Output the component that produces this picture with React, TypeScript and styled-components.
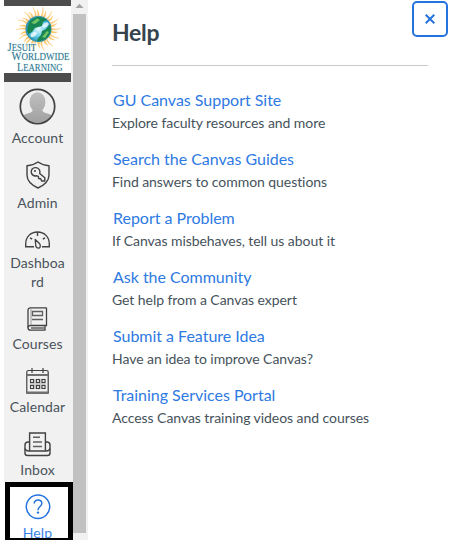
import React from "react";
import styled, { createGlobalStyle } from "styled-components";

const GlobalStyle = createGlobalStyle`
  * { box-sizing: border-box; }
  html, body { margin: 0; background: #fff; overflow: hidden; }
  body { font-family: Lato, "Open Sans", sans-serif; color: #2d3b45; font-variant-ligatures: none; }
`;

const Page = styled.div`
  display: flex;
  width: 450px;
  height: 540px;
  padding-left: 4px;
  overflow: hidden;
  background: #fff;
`;

const Nav = styled.nav`
  width: 69px;
  flex: none;
  background: #f1f1f1;
  display: flex;
  flex-direction: column;
`;

const LogoFrame = styled.div`
  width: 67px;
  height: 82px;
  flex: none;
  padding: 6px 0 9px;
  background: #4d4d4d;
  svg { display: block; background: #fff; }
`;

const NavItem = styled.a<{ $top: number; $gap: number }>`
  width: 67px;
  flex: none;
  display: flex;
  flex-direction: column;
  align-items: center;
  padding-top: ${(p) => p.$top}px;
  gap: ${(p) => p.$gap}px;
  svg { display: block; flex: none; }
`;

const ActiveRow = styled.div`
  flex: none;
  height: 58px;
  margin-top: 3px;
  padding-left: 1px;
  background: #fff;
`;

const ActiveItem = styled(NavItem)`
  width: 68px;
  height: 58px;
  border: 5px solid #000;
  border-bottom-width: 2px;
  padding-right: 3px;
  overflow: hidden;
  background: #fff;
`;

const Label = styled.span<{ $active?: boolean }>`
  font-size: 14px;
  line-height: 19px;
  letter-spacing: 0.1px;
  text-align: center;
  white-space: pre;
  color: ${(p) => (p.$active ? "#3b82e6" : "#4a535b")};
`;

const Scrollbar = styled.div`
  width: 15px;
  flex: none;
  background: #f1f1f1;
  svg { display: block; }
`;

const Thumb = styled.div`
  width: 13px;
  height: 519px;
  background: #c1c1c1;
`;

const Tray = styled.main`
  flex: 1;
  min-width: 0;
  padding-left: 24px;
`;

const Header = styled.header`
  display: flex;
  justify-content: space-between;
  align-items: flex-start;
  width: 336px;
  height: 65px;
`;

const Title = styled.h2`
  margin: 18px 0 0;
  font-size: 23px;
  line-height: 29px;
  font-weight: 700;
  letter-spacing: -0.3px;
  color: #35434d;
`;

const Links = styled.ul`
  list-style: none;
  width: 316px;
  margin: 0;
  padding: 23px 0 0;
  border-top: 1px solid #c9c9c9;
`;

const LinkItem = styled.li`
  height: 59px;
`;

const LinkTitle = styled.a`
  display: block;
  padding-left: 1px;
  font-size: 16px;
  line-height: 22px;
  letter-spacing: -0.02px;
  color: #2e7ae2;
  white-space: nowrap;
`;

const LinkText = styled.div`
  margin-top: 1px;
  font-size: 14px;
  line-height: 22px;
  letter-spacing: -0.06px;
  color: #46525b;
  white-space: nowrap;
`;

const CloseButton = styled.button`
  width: 36px;
  height: 36px;
  flex: none;
  margin: 1px 0 0;
  padding: 0;
  display: flex;
  align-items: center;
  justify-content: center;
  border: 2px solid #2573df;
  border-radius: 5px;
  background: #fff;
`;

const ink = "#414141";

const Logo = () => (
  <svg width="67" height="67" viewBox="4 6 67 67">
    <defs>
      <radialGradient id="globe" cx="0.5" cy="0.5" r="0.55">
        <stop offset="0" stopColor="#e8fbff" />
        <stop offset="0.55" stopColor="#65cbe8" />
        <stop offset="1" stopColor="#1685ae" />
      </radialGradient>
    </defs>
    {Array.from({ length: 28 }, (_, i) => (
      <path
        key={i}
        d={i % 2 ? "M37.500 16.500Q39.500 12 37.800 6.500Q40.500 12 39.200 16.500Z" : "M37 16.500Q38.500 13 37 9.500Q40 13 39.200 16.500Z"}
        fill="#fbc468"
        stroke="#fcd390"
        strokeWidth="0.4"
        transform={`rotate(${(i * 360) / 28} 38.500 29)`}
      />
    ))}
    <circle cx="38.500" cy="29" r="12.700" fill="url(#globe)" stroke="#2787a4" strokeWidth="0.700" />
    <path d="M27.500 27Q29 19 37 17Q43 16.500 47 20L43 22L42 26L38 27L35 28L32 32L28 34Q26.500 31 27.500 27Z" fill="#188653" />
    <path d="M31 23L37 18.500L40 20L35 24Z" fill="#72c565" />
    <path d="M38 38L41 35L42 31L46 29L50 24Q52.500 32 47 38Q42 42 37 41Z" fill="#188653" />
    <path d="M42 37L47 31L49 32L45 38Z" fill="#72c565" />
    <ellipse cx="45.500" cy="25" rx="3.500" ry="2" fill="#fff" opacity="0.75" transform="rotate(-35 45.500 25)" />
    <ellipse cx="33.500" cy="34.500" rx="3.500" ry="2" fill="#fff" opacity="0.75" transform="rotate(-35 33.500 34.500)" />
    <g fill="#2a7189" stroke="#e9f7fa" strokeWidth="1" paintOrder="stroke" fontFamily="Liberation Serif, serif">
      <text x="7.500" y="51" fontSize="13" textLength="28.500" lengthAdjust="spacingAndGlyphs">J<tspan fontSize="10.500">ESUIT</tspan></text>
      <text x="11.500" y="60" fontSize="11.500" textLength="58" lengthAdjust="spacingAndGlyphs">W<tspan fontSize="9.800">ORLDWIDE</tspan></text>
      <text x="17" y="71" fontSize="11.500" textLength="45.500" lengthAdjust="spacingAndGlyphs">L<tspan fontSize="9.800">EARNING</tspan></text>
    </g>
  </svg>
);

const AccountIcon = () => (
  <svg width="37" height="37" viewBox="0 0 37 37">
    <defs>
      <clipPath id="avatar"><circle cx="18.500" cy="18.500" r="16.500" /></clipPath>
      <linearGradient id="person" gradientUnits="userSpaceOnUse" x1="0" y1="4" x2="0" y2="35"><stop stopColor="#c0c0c0" /><stop offset="1" stopColor="#a0a0a0" /></linearGradient>
    </defs>
    <circle cx="18.500" cy="18.500" r="17" fill="#efefef" />
    <g fill="url(#person)" clipPath="url(#avatar)">
      <ellipse cx="18.500" cy="14" rx="8" ry="9.800" />
      <path d="M13.500 20h10v3q1 1.500 5 2.500q6 1 7 9H1.500q1-8 7-9q4-1 5-2.500z" />
    </g>
    <circle cx="18.500" cy="18.500" r="17.200" fill="none" stroke={ink} strokeWidth="1.700" />
  </svg>
);

const AdminIcon = () => (
  <svg width="26" height="28" viewBox="0 0 26 28" fill="none" stroke={ink} strokeWidth="1.400" strokeLinejoin="round">
    <path d="M13 1Q18 4.500 24 4.800V14C24 20 19.500 24 13 27C6.500 24 2 20 2 14V4.800Q8 4.500 13 1Z" />
    <path d="M7 8.200C9 5.800 13 6.200 14.500 9C15.200 10.500 15 11.500 14.700 12.500L19.800 16.800V20H16.600L15.700 17.800L13.600 17.500L13.400 15.300L11.800 14.800C9.500 15.200 7.200 14.400 6.500 12.300C6 10.800 6.100 9.500 7 8.200Z" strokeWidth="1.400" />
    <circle cx="10" cy="10" r="1" fill={ink} stroke="none" />
  </svg>
);

const DashboardIcon = () => (
  <svg width="27" height="18" viewBox="0 0 27 18" fill="none" stroke={ink} strokeWidth="1.400">
    <path d="M10 15.700H1.700V13C1.700 6 6.500 1 13.500 1S25.300 6 25.300 13V15.700H18" />
    <path d="M13.500 1V5M6 6.800L8.200 8.200M21 6.800L18.800 8.200" />
    <path d="M11.200 8.500L15.700 12.800C17 14.700 16.200 17.200 14.400 17.200C12.700 17.200 11.800 16 11.700 14Z" strokeWidth="1.300" strokeLinejoin="round" />
  </svg>
);

const CoursesIcon = () => (
  <svg width="21" height="24" viewBox="0 0 21 24" fill="none" stroke={ink} strokeWidth="1.300">
    <path d="M19.500 .8H3.500C1.600 .8 1 2 1 3.500V20.500C1 22.500 2 23.200 3.500 23.200H18.500" />
    <path d="M19.500 .8V18.500H3.500C2 18.500 1 19.200 1 20.500M18 18.500V23" />
    <path d="M4 1V18" stroke="#999" strokeWidth="1" />
    <path d="M5.500 4.500H15.500V8.500H5.500ZM5 12.500H16M4 21H17.500" stroke="#606060" />
  </svg>
);

const CalendarIcon = () => (
  <svg width="23" height="26" viewBox="0 0 23 26" fill="none" stroke={ink} strokeWidth="1.200">
    <path d="M2.500 2.500H20.500Q22.200 2.500 22.200 4V25.200H.8V4Q.8 2.500 2.500 2.500Z" />
    <path d="M1 7H22M1 24.500H22" stroke="#707070" strokeWidth="2" />
    <path d="M6 0V5M17 0V5" />
    <rect x="4" y="11" width="15.500" height="10" fill="#ccc" stroke="none" />
    {[4.5, 10.5, 16].flatMap((x) => [11.5, 17.5].map((y) => <rect key={`${x}-${y}`} x={x} y={y} width="3" height="3" fill="#f1f1f1" strokeWidth="1.100" />))}
  </svg>
);

const InboxIcon = () => (
  <svg width="27" height="25" viewBox="0 0 27 25" fill="none" stroke={ink} strokeWidth="1.400">
    <path d="M5.600 19V1H21.400V19" />
    <path d="M9 5.300H16M9 10H18M9 14.500H18" stroke="#606060" />
    <path d="M5.500 10H3.500Q1 10.500 1 13V21Q1 23.500 3.500 23.500H23.500Q26 23.500 26 21V13Q26 10.500 23.500 10H21.500" />
    <path d="M1 16.500Q2 19 4.500 19H22.500Q25 19 26 16.500" />
  </svg>
);

const HelpIcon = () => (
  <svg width="26" height="26" viewBox="0 0 26 26" fill="none" stroke="#2573df" strokeWidth="1.500">
    <circle cx="13" cy="12.700" r="11.700" />
    <path d="M9.200 9.500C9.200 4.800 16.800 5.100 16.800 9.400C16.800 12.600 13 12.400 13 16.200" />
    <circle cx="13" cy="18.600" r="1.200" fill="#2573df" stroke="none" />
  </svg>
);

const items = [
  { label: "Account", Icon: AccountIcon, top: 6, gap: 3 },
  { label: "Admin", Icon: AdminIcon, top: 14, gap: 4 },
  { label: "Dashboa\nrd", Icon: DashboardIcon, top: 19, gap: 4 },
  { label: "Courses", Icon: CoursesIcon, top: 16, gap: 3 },
  { label: "Calendar", Icon: CalendarIcon, top: 15, gap: 3 },
  { label: "Inbox", Icon: InboxIcon, top: 16, gap: 3 },
];

const links = [
  ["GU Canvas Support Site", "Explore faculty resources and more"],
  ["Search the Canvas Guides", "Find answers to common questions"],
  ["Report a Problem", "If Canvas misbehaves, tell us about it"],
  ["Ask the Community", "Get help from a Canvas expert"],
  ["Submit a Feature Idea", "Have an idea to improve Canvas?"],
  ["Training Services Portal", "Access Canvas training videos and courses"],
];

export default function App() {
  return (
    <>
      <GlobalStyle />
      <Page>
        <Nav>
          <LogoFrame><Logo /></LogoFrame>
          {items.map(({ label, Icon, top, gap }) => (
            <NavItem key={label} $top={top} $gap={gap}>
              <Icon />
              <Label>{label}</Label>
            </NavItem>
          ))}
          <ActiveRow>
            <ActiveItem $top={7} $gap={3}>
              <HelpIcon />
              <Label $active>Help</Label>
            </ActiveItem>
          </ActiveRow>
        </Nav>
        <Scrollbar>
          <svg width="13" height="14"><path d="M2.500 8L6.500 3.800L10.500 8Z" fill="#a3a3a3" /></svg>
          <Thumb />
        </Scrollbar>
        <Tray>
          <Header>
            <Title>Help</Title>
            <CloseButton aria-label="Close">
              <svg width="10" height="10" viewBox="0 0 10 10"><path d="M.7 .7L9.300 9.300M9.300 .7L.7 9.300" stroke="#2573df" strokeWidth="2" /></svg>
            </CloseButton>
          </Header>
          <Links>
            {links.map(([title, text]) => (
              <LinkItem key={title}>
                <LinkTitle>{title}</LinkTitle>
                <LinkText>{text}</LinkText>
              </LinkItem>
            ))}
          </Links>
        </Tray>
      </Page>
    </>
  );
}
